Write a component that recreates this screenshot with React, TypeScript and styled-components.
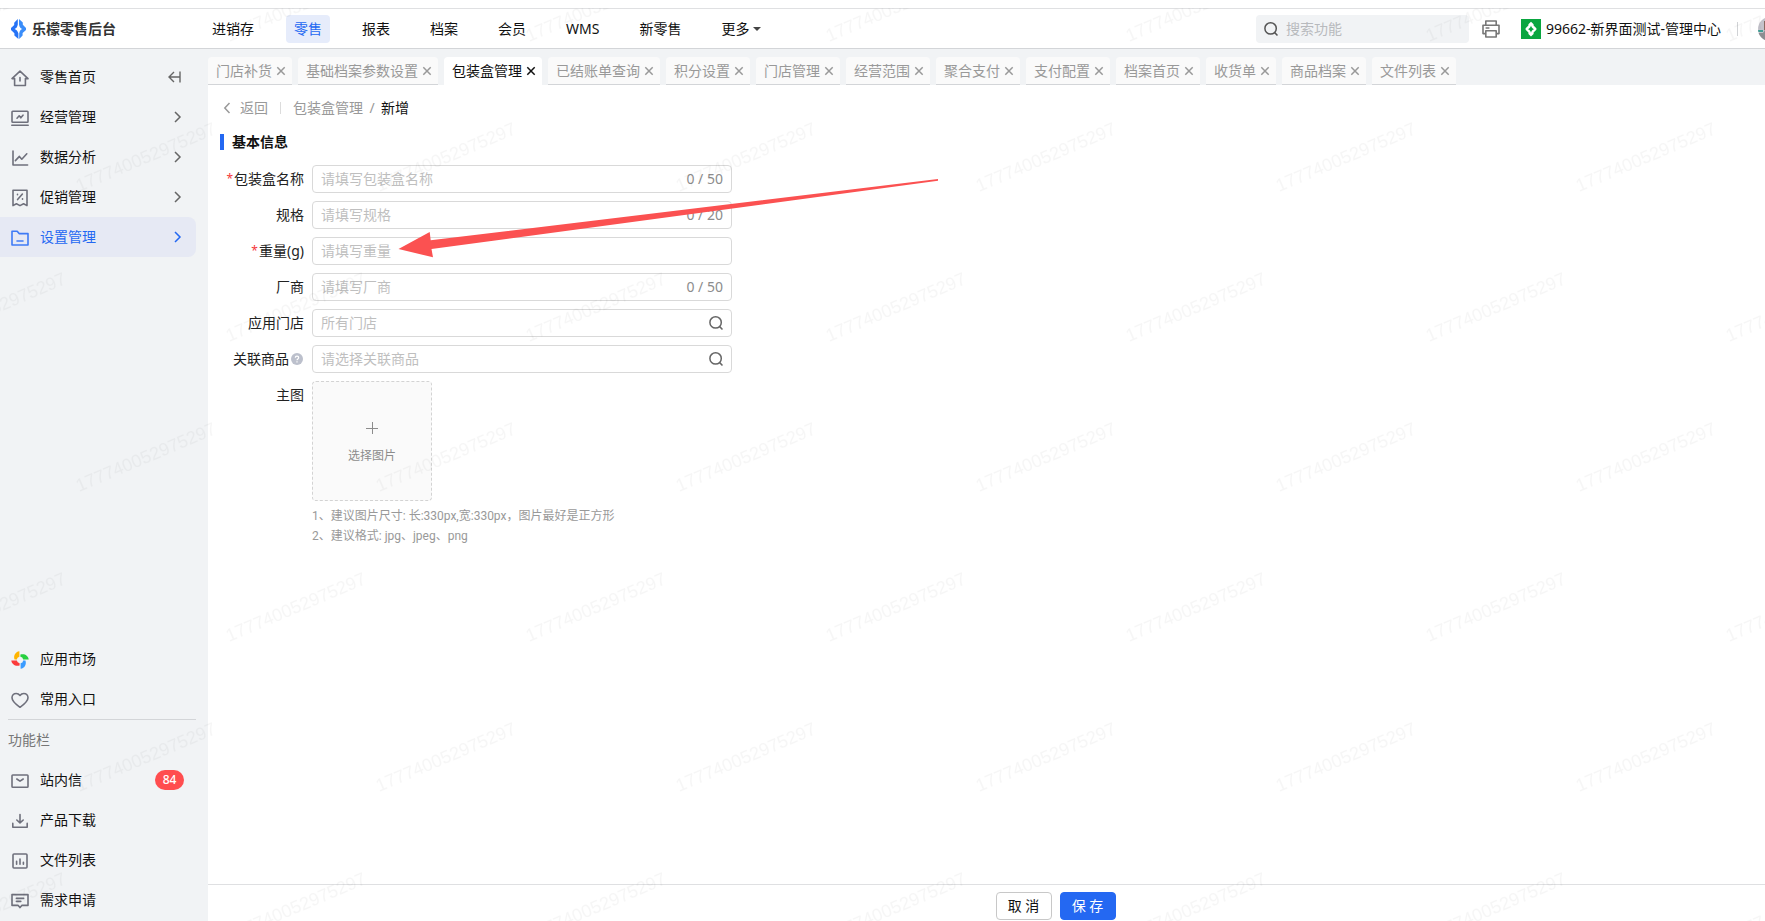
import React from 'react';
import styled, { createGlobalStyle, css } from 'styled-components';

const GlobalStyle = createGlobalStyle`
  *, *::before, *::after { box-sizing: border-box; }
  body {
    margin: 0;
    background: #fff;
    color: #1a1a1a;
    font: 14px/20px "Noto Sans", "Noto Sans CJK SC", sans-serif;
  }
  button, input { font: inherit; color: inherit; }
  button { border: 0; padding: 0; background: none; cursor: pointer; }
  a { color: inherit; text-decoration: none; }
  svg { display: block; flex: none; overflow: visible; }
`;

const Page = styled.div`
  position: relative;
  display: flex;
  flex-direction: column;
  min-height: 100vh;
  padding-top: 8px;
  overflow: hidden;
`;

/* ---------- header ---------- */

const Header = styled.header`
  display: flex;
  align-items: center;
  height: 41px;
  border-top: 1px solid #dfe0e2;
  border-bottom: 1px solid #d3d5d8;
`;

const Brand = styled.a`
  display: flex;
  align-items: center;
  gap: 6px;
  width: 204px;
  padding-left: 11px;
  flex: none;
  font-weight: 700;
  color: #333;
`;

const TopNav = styled.nav`
  display: flex;
  gap: 24px;
`;

const TopLink = styled.a<{ $active?: boolean }>`
  display: flex;
  align-items: center;
  gap: 4px;
  height: 28px;
  padding: 0 8px;
  border-radius: 4px;
  white-space: nowrap;
  color: ${p => (p.$active ? '#2468f2' : '#111')};
  background: ${p => (p.$active ? '#e6ecfb' : 'transparent')};
`;

const HeaderTools = styled.div`
  display: flex;
  align-items: center;
  margin-left: auto;
  margin-right: -17px;
`;

const SearchBox = styled.label`
  display: flex;
  align-items: center;
  gap: 8px;
  width: 213px;
  height: 28px;
  padding: 0 8px;
  border-radius: 4px;
  background: #f1f3f5;
  color: #555;
`;

const SearchInput = styled.input`
  flex: 1;
  min-width: 0;
  border: 0;
  padding: 0;
  outline: 0;
  background: none;
  &::placeholder { color: #b8babd; opacity: 1; }
`;

const PrintButton = styled.button`
  margin-left: 13px;
  color: #777;
`;

const Account = styled.a`
  display: flex;
  align-items: center;
  gap: 5px;
  margin-left: 21px;
  white-space: nowrap;
  color: #111;
`;

const ToolDivider = styled.span`
  width: 1px;
  height: 14px;
  margin: 0 20px 0 16px;
  background: #d0d2d5;
`;

/* ---------- sidebar ---------- */

const Body = styled.div`
  display: flex;
  flex: 1;
`;

const Sidebar = styled.aside`
  display: flex;
  flex-direction: column;
  flex: none;
  width: 208px;
  padding: 8px 12px 1px 0;
  background: #f1f3f5;
`;

const SideGroup = styled.nav<{ $bottom?: boolean }>`
  display: flex;
  flex-direction: column;
  ${p => p.$bottom && css`margin-top: auto;`}
`;

const SideLink = styled.a<{ $active?: boolean }>`
  display: flex;
  align-items: center;
  gap: 11px;
  height: 40px;
  padding: 0 12px 0 11px;
  border-radius: 0 8px 8px 0;
  color: ${p => (p.$active ? '#2468f2' : '#111')};
  background: ${p => (p.$active ? '#e6e9f4' : 'transparent')};
  & > svg { color: ${p => (p.$active ? '#3f7bf5' : '#6f707c')}; }
  & > svg:last-child {
    margin-right: 3px;
    color: ${p => (p.$active ? '#2468f2' : '#666')};
  }
`;

const SideText = styled.span`
  flex: 1;
  white-space: nowrap;
`;

const SideDivider = styled.hr`
  width: 188px;
  height: 1px;
  margin: 0 0 0 8px;
  border: 0;
  background: #d3d5d8;
`;

const SideHeading = styled.div`
  height: 40px;
  padding-left: 8px;
  line-height: 40px;
  color: #777;
`;

const Badge = styled.span`
  width: 29px;
  height: 20px;
  border-radius: 10px;
  background: #ff4d4f;
  color: #fff;
  font-size: 12px;
  font-weight: 500;
  text-align: center;
`;

/* ---------- main ---------- */

const Main = styled.main`
  display: flex;
  flex-direction: column;
  flex: 1;
  min-width: 0;
`;

const TabBar = styled.div`
  display: flex;
  gap: 6px;
  height: 36px;
  padding-top: 8px;
  background: #f1f3f5;
`;

const Tab = styled.div<{ $active?: boolean }>`
  display: flex;
  align-items: center;
  gap: 5px;
  height: 28px;
  padding: 0 7px 0 8px;
  border-radius: 4px 4px 0 0;
  border-bottom: 1px solid ${p => (p.$active ? '#fff' : '#d3d5d8')};
  background: ${p => (p.$active ? '#fff' : '#fafafa')};
  color: ${p => (p.$active ? '#111' : '#999')};
  white-space: nowrap;
`;

const Crumbs = styled.div`
  display: flex;
  align-items: center;
  height: 46px;
  padding-left: 16px;
  color: #999;
`;

const BackButton = styled.button`
  display: flex;
  align-items: center;
  gap: 10px;
`;

const CrumbDivider = styled.span`
  width: 1px;
  height: 12px;
  margin: 0 12px;
  background: #dcdcdc;
`;

const CrumbSlash = styled.span`
  width: 18px;
  text-align: center;
`;

const CrumbCurrent = styled.span`
  color: #111;
`;

const SectionTitle = styled.h2`
  display: flex;
  align-items: center;
  gap: 8px;
  margin: 0 0 0 12px;
  font-size: 14px;
  line-height: 22px;
  font-weight: 700;
  color: #111;
  &::before {
    content: '';
    width: 4px;
    height: 16px;
    background: #2468f2;
  }
`;

const Form = styled.form`
  display: flex;
  flex-direction: column;
  gap: 8px;
  padding-top: 12px;
`;

const Row = styled.div`
  display: flex;
  align-items: flex-start;
  gap: 8px;
`;

const RowLabel = styled.label`
  display: flex;
  align-items: center;
  justify-content: flex-end;
  flex: none;
  width: 96px;
  height: 28px;
  color: #222;
  & > svg { margin: 0 1px 0 2px; }
`;

const Required = styled.span`
  margin-right: 1px;
  font-size: 12px;
  color: #f5383b;
`;

const Field = styled.div`
  display: flex;
  align-items: center;
  gap: 8px;
  width: 420px;
  height: 28px;
  padding: 0 8px;
  border: 1px solid #d9d9d9;
  border-radius: 4px;
  background: #fff;
  color: #666;
`;

const TextInput = styled.input`
  flex: 1;
  min-width: 0;
  border: 0;
  padding: 0;
  outline: 0;
  background: none;
  &::placeholder { color: #bfbfbf; opacity: 1; }
`;

const Counter = styled.span`
  color: #8c8c8c;
`;

const FormList = styled.div`
  display: flex;
  flex-direction: column;
  gap: 8px;
`;

const UploadButton = styled.button`
  display: flex;
  flex-direction: column;
  align-items: center;
  justify-content: center;
  gap: 12px;
  width: 120px;
  height: 120px;
  padding-top: 6px;
  border: 1px dashed #d3d3d3;
  border-radius: 4px;
  background: #fafafa;
  color: #8c8c8c;
  font-size: 12px;
`;

const Hints = styled.p`
  margin: 5px 0 0;
  font-family: Roboto, "Noto Sans CJK SC", sans-serif;
  font-size: 12px;
  line-height: 20px;
  color: #999;
`;

const Footer = styled.footer`
  display: flex;
  justify-content: center;
  gap: 8px;
  height: 37px;
  margin-top: auto;
  padding: 7px 0 0 138px;
  border-top: 1px solid #dfe0e2;
`;

const ActionButton = styled.button<{ $primary?: boolean }>`
  width: 56px;
  height: 28px;
  border: 1px solid ${p => (p.$primary ? '#2468f2' : '#c8c8c8')};
  border-radius: 4px;
  background: ${p => (p.$primary ? '#2468f2' : '#fff')};
  color: ${p => (p.$primary ? '#fff' : '#111')};
  white-space: nowrap;
`;

/* ---------- overlays ---------- */

const Overlay = styled.svg`
  position: absolute;
  inset: 0;
  width: 100%;
  height: 100%;
  pointer-events: none;
`;

const WatermarkLayer = styled(Overlay)`
  top: 8px;
  height: calc(100% - 8px);
  overflow: hidden;
`;

/* ---------- icons ---------- */

type IconProps = { children: React.ReactNode };

const LineIcon = ({ children }: IconProps) => (
  <svg width="18" height="18" viewBox="0 -1 18 18" fill="none" stroke="currentColor" strokeWidth="1.6" strokeLinejoin="round" strokeLinecap="round" aria-hidden="true">
    {children}
  </svg>
);

const HomeIcon = () => (
  <LineIcon><path d="M1 9.6 9 2.2l8 7.400h-2.600v6.900H3.600V9.600zM9 8.600v3.400" /></LineIcon>
);
const MonitorIcon = () => (
  <LineIcon><rect x="1" y="2.200" width="16" height="11" rx=".8" /><path d="M.8 16.200h16.400M6 9.200 8.200 6.800l1.600 2 2.200-2.600" /></LineIcon>
);
const TrendIcon = () => (
  <LineIcon><path d="M2 2v14h14.600M4.400 11.600l4-4.200 2.400 2.800 5-5.400" /></LineIcon>
);
const CouponIcon = () => (
  <LineIcon><path d="M2 1.200h14v15.400l-3.400-1.800L9 16.600l-3.600-1.800L2 16.600zM11.400 5l-4.800 5.600M6.500 5.400v.4M11.500 9.800v.4" /></LineIcon>
);
const FolderIcon = () => (
  <LineIcon><path d="M1 16V2.200h5.200l1.900 2.400H17V16zM6 12h6" /></LineIcon>
);
const HeartIcon = () => (
  <LineIcon><path d="M9 16.300C5 13.500 1 10.600 1 6.800 1 4.200 2.900 2.500 5.200 2.500c1.600 0 2.900.8 3.800 2 .9-1.200 2.200-2 3.800-2C15.100 2.500 17 4.200 17 6.800c0 3.800-4 6.700-8 9.500z" /></LineIcon>
);
const MailIcon = () => (
  <LineIcon><rect x="1" y="3" width="16" height="12.300" rx=".8" /><path d="m5.800 7 3.200 2.200L12.200 7" /></LineIcon>
);
const DownloadIcon = () => (
  <LineIcon><path d="M1.800 11.400v3.800h14.400v-3.800M9 2.600v8.200M5.800 8 9 10.900 12.200 8" /></LineIcon>
);
const ReportIcon = () => (
  <LineIcon><rect x="2" y="2" width="14" height="14" rx="1" /><path d="M5.600 9.200v3M9 7v5.200M12.400 10.200v2" /></LineIcon>
);
const FeedbackIcon = () => (
  <LineIcon><path d="M1 2.600h16v10.800h-6.200L9 15.600l-1.800-2.200H1zM5.400 6.400h7.200M5.400 9.400h4.400" /></LineIcon>
);
const PinwheelIcon = () => (
  <svg width="18" height="18" viewBox="0 -1 18 18" aria-hidden="true">
    <path d="M8.400.3v5.500A3.200 3.200 0 0 0 5.800 8.600H3.600C2.200 5 4.200.8 8.400.3z" fill="#ffb400" />
    <path d="M17.700 8.400h-5.500A3.200 3.200 0 0 0 9.400 5.800V3.600c3.600-1.400 7.800.6 8.300 4.800z" fill="#27d03f" />
    <path d="M9.600 17.700v-5.500a3.200 3.200 0 0 0 2.600-2.800h2.200c1.400 3.600-.6 7.800-4.800 8.300z" fill="#3a9bff" />
    <path d="M.3 9.600h5.500a3.200 3.200 0 0 0 2.800 2.600v2.200C5 15.800.8 13.800.3 9.600z" fill="#fb3b3b" />
  </svg>
);

const ChevronRight = () => (
  <svg width="7" height="12" viewBox="0 0 7 12" fill="none" stroke="currentColor" strokeWidth="1.500" aria-hidden="true"><path d="m1 1 5 5-5 5" /></svg>
);
const ChevronLeft = () => (
  <svg width="6" height="10" viewBox="0 0 6 10" fill="none" stroke="currentColor" strokeWidth="1.500" aria-hidden="true"><path d="M5.500 0 .8 5l4.700 5" /></svg>
);
const CollapseIcon = () => (
  <svg width="14" height="12" viewBox="0 0 14 12" fill="none" stroke="currentColor" strokeWidth="1.400" aria-hidden="true"><path d="M7 1 2 6l5 5M2 6h10.500M13 .5v11" /></svg>
);
const CloseIcon = () => (
  <svg width="8" height="8" viewBox="0 0 8 8" fill="none" stroke="currentColor" strokeWidth="1.500" aria-hidden="true"><path d="m.3.3 7.400 7.400M7.700.3.3 7.700" /></svg>
);
const SearchIcon = () => (
  <svg width="14" height="14" viewBox="0 0 14 14" fill="none" stroke="currentColor" strokeWidth="1.500" aria-hidden="true"><circle cx="6.600" cy="6.400" r="5.700" /><path d="m10.400 10.400 3.100 3.100" /></svg>
);
const PrinterIcon = () => (
  <svg width="18" height="18" viewBox="0 0 18 18" fill="none" stroke="currentColor" strokeWidth="1.600" strokeLinejoin="round" aria-hidden="true">
    <path d="M3.800 5V1h10.400v4M3.800 13.600H1V5.200h16v8.400h-2.800M3.800 10.800h10.400V17H3.800zM3.600 8h3.800" />
  </svg>
);
const HelpIcon = () => (
  <svg width="12" height="12" viewBox="0 0 12 12" aria-hidden="true">
    <circle cx="6" cy="6" r="6" fill="#bcc0cc" />
    <path d="M4.300 4.800C4.300 2.500 7.700 2.600 7.700 4.700 7.700 5.900 6 5.900 6 7.200M6 8.300v1.200" fill="none" stroke="#fff" strokeWidth="1.200" />
  </svg>
);
const PlusIcon = () => (
  <svg width="12" height="12" viewBox="0 0 12 12" fill="none" stroke="currentColor" aria-hidden="true"><path d="M6.500 0v12M0 6.500h12" /></svg>
);
const CaretIcon = () => (
  <svg width="8" height="4" viewBox="0 0 8 4" fill="#444" aria-hidden="true"><path d="M0 0h8L4 4z" /></svg>
);
const BrandMark = () => (
  <svg width="15" height="20" viewBox="0 0 15 20" aria-hidden="true">
    <path d="M6.800 0v5.600C6.400 8 5.400 9.400 3.600 10c1.800.6 3.200 2.200 3.800 4.600V20l-4-3.600v-2.200L0 11V9l3.200-3V3.800z" fill="#2673f6" />
    <path d="M8 0l3.800 3.600v2.200L15 9v2l-3.400 3v2.400L8.200 20v-5.600c.4-2.400 1.400-3.800 3.200-4.400C9.600 9.400 8.400 7.800 8 5.400z" fill="#3a8dfa" />
  </svg>
);
const StoreMark = () => (
  <svg width="20" height="20" viewBox="0 0 20 20" aria-hidden="true">
    <path d="M0 0h20v20H0z" fill="#0aa640" />
    <path fillRule="evenodd" d="m10 2.800 2.600 2.400v1.400l2.800 2.600v1.600l-2.800 2.600v1.600L10 17.400l-2.600-2.400v-1.600l-2.800-2.600V9.200l2.800-2.600V5.200zm0 3.800C9.600 8.600 8.600 9.600 7 10.200c1.600.6 2.600 1.600 3 3.600.4-2 1.400-3 3-3.600-1.600-.6-2.600-1.600-3-3.600z" fill="#fff" />
  </svg>
);
const Avatar = () => (
  <svg width="24" height="24" viewBox="0 0 24 24" aria-hidden="true">
    <clipPath id="avatar-clip"><circle cx="12" cy="12" r="12" /></clipPath>
    <g clipPath="url(#avatar-clip)">
      <path d="M0 0h24v24H0z" fill="#c4c3cb" />
      <path d="M0 16h5l4-6h15v14H0z" fill="#8d8e92" />
      <path d="M0 13h5v2H0z" fill="#3f9d93" />
      <path d="M6 4h3v9H6z" fill="#8b6a62" />
    </g>
  </svg>
);

/* ---------- data ---------- */

const topLinks = ['进销存', '零售', '报表', '档案', '会员', 'WMS', '新零售', '更多'];

const sideLinks = [
  { text: '经营管理', icon: <MonitorIcon /> },
  { text: '数据分析', icon: <TrendIcon /> },
  { text: '促销管理', icon: <CouponIcon /> },
  { text: '设置管理', icon: <FolderIcon />, active: true },
];

const toolLinks = [
  { text: '站内信', icon: <MailIcon />, badge: 84 },
  { text: '产品下载', icon: <DownloadIcon /> },
  { text: '文件列表', icon: <ReportIcon /> },
  { text: '需求申请', icon: <FeedbackIcon /> },
];

const tabs = [
  '门店补货', '基础档案参数设置', '包装盒管理', '已结账单查询', '积分设置', '门店管理', '经营范围',
  '聚合支付', '支付配置', '档案首页', '收货单', '商品档案', '文件列表',
];

type FieldSpec = {
  id: string;
  label: string;
  placeholder: string;
  required?: boolean;
  help?: boolean;
  max?: number;
  picker?: boolean;
};

const fields: FieldSpec[] = [
  { id: 'name', label: '包装盒名称', placeholder: '请填写包装盒名称', required: true, max: 50 },
  { id: 'spec', label: '规格', placeholder: '请填写规格', max: 20 },
  { id: 'weight', label: '重量(g)', placeholder: '请填写重量', required: true },
  { id: 'vendor', label: '厂商', placeholder: '请填写厂商', max: 50 },
  { id: 'stores', label: '应用门店', placeholder: '所有门店', picker: true },
  { id: 'goods', label: '关联商品', placeholder: '请选择关联商品', help: true, picker: true },
];

const FormField = ({ id, label, placeholder, required, help, max, picker }: FieldSpec) => (
  <Row>
    <RowLabel htmlFor={id}>
      {required && <Required>*</Required>}
      {label}
      {help && <HelpIcon />}
    </RowLabel>
    <Field>
      <TextInput id={id} placeholder={placeholder} maxLength={max} />
      {max && <Counter>0 / {max}</Counter>}
      {picker && <button type="button" aria-label={`选择${label}`}><SearchIcon /></button>}
    </Field>
  </Row>
);

const Watermark = () => (
  <WatermarkLayer aria-hidden="true">
    <defs>
      <pattern id="watermark" x="70" y="92" width="300" height="300" patternUnits="userSpaceOnUse">
        <g fill="#000" fillOpacity=".035" fontFamily="Liberation Sans, sans-serif" fontSize="18">
          <text transform="translate(9 92) rotate(-23)">177740052975297</text>
          <text transform="translate(159 242) rotate(-23)">177740052975297</text>
        </g>
      </pattern>
    </defs>
    <rect width="100%" height="100%" fill="url(#watermark)" />
  </WatermarkLayer>
);

export default function App() {
  return (
    <Page>
      <GlobalStyle />
      <Header>
        <Brand href="#"><BrandMark />乐檬零售后台</Brand>
        <TopNav>
          {topLinks.map(text => (
            <TopLink key={text} href="#" $active={text === '零售'}>
              {text}
              {text === '更多' && <CaretIcon />}
            </TopLink>
          ))}
        </TopNav>
        <HeaderTools>
          <SearchBox>
            <SearchIcon />
            <SearchInput placeholder="搜索功能" aria-label="搜索功能" />
          </SearchBox>
          <PrintButton aria-label="打印"><PrinterIcon /></PrintButton>
          <Account href="#"><StoreMark />99662-新界面测试-管理中心</Account>
          <ToolDivider />
          <Avatar />
        </HeaderTools>
      </Header>

      <Body>
        <Sidebar>
          <SideGroup>
            <SideLink href="#"><HomeIcon /><SideText>零售首页</SideText><CollapseIcon /></SideLink>
            {sideLinks.map(item => (
              <SideLink key={item.text} href="#" $active={item.active}>
                {item.icon}
                <SideText>{item.text}</SideText>
                <ChevronRight />
              </SideLink>
            ))}
          </SideGroup>
          <SideGroup $bottom>
            <SideLink href="#"><PinwheelIcon /><SideText>应用市场</SideText></SideLink>
            <SideLink href="#"><HeartIcon /><SideText>常用入口</SideText></SideLink>
            <SideDivider />
            <SideHeading>功能栏</SideHeading>
            {toolLinks.map(item => (
              <SideLink key={item.text} href="#">
                {item.icon}
                <SideText>{item.text}</SideText>
                {item.badge && <Badge>{item.badge}</Badge>}
              </SideLink>
            ))}
          </SideGroup>
        </Sidebar>

        <Main>
          <TabBar>
            {tabs.map(text => (
              <Tab key={text} $active={text === '包装盒管理'}>
                {text}
                <button aria-label={`关闭${text}`}><CloseIcon /></button>
              </Tab>
            ))}
          </TabBar>
          <Crumbs>
            <BackButton><ChevronLeft />返回</BackButton>
            <CrumbDivider />
            <a href="#">包装盒管理</a>
            <CrumbSlash>/</CrumbSlash>
            <CrumbCurrent>新增</CrumbCurrent>
          </Crumbs>
          <SectionTitle>基本信息</SectionTitle>
          <Form>
            <FormList>
              {fields.map(field => <FormField key={field.id} {...field} />)}
            </FormList>
            <Row>
              <RowLabel htmlFor="picture">主图</RowLabel>
              <div>
                <UploadButton id="picture" type="button"><PlusIcon />选择图片</UploadButton>
                <Hints>
                  1、建议图片尺寸: 长:330px,宽:330px，图片最好是正方形<br />
                  2、建议格式: jpg、jpeg、png
                </Hints>
              </div>
            </Row>
          </Form>
          <Footer>
            <ActionButton>取 消</ActionButton>
            <ActionButton $primary>保 存</ActionButton>
          </Footer>
        </Main>
      </Body>

      <Watermark />
      <Overlay aria-hidden="true">
        <path d="M398.500 249 429.700 232l1 8.300L938 179v1.700L431.500 249l1.500 8.300z" fill="#fb5151" />
      </Overlay>
    </Page>
  );
}
